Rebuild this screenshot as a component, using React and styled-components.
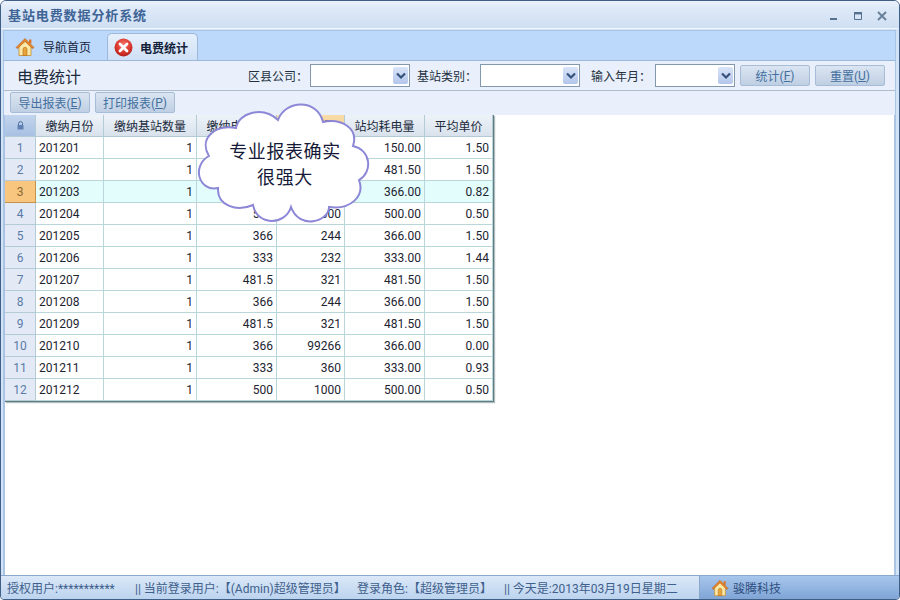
import React from 'react';
import styled, { createGlobalStyle } from 'styled-components';

const rows = [
  ['201201', 1, '150', '100', '150.00', '1.50'],
  ['201202', 1, '481.5', '321', '481.50', '1.50'],
  ['201203', 1, '366', '446', '366.00', '0.82'],
  ['201204', 1, '500', '1000', '500.00', '0.50'],
  ['201205', 1, '366', '244', '366.00', '1.50'],
  ['201206', 1, '333', '232', '333.00', '1.44'],
  ['201207', 1, '481.5', '321', '481.50', '1.50'],
  ['201208', 1, '366', '244', '366.00', '1.50'],
  ['201209', 1, '481.5', '321', '481.50', '1.50'],
  ['201210', 1, '366', '99266', '366.00', '0.00'],
  ['201211', 1, '333', '360', '333.00', '0.93'],
  ['201212', 1, '500', '1000', '500.00', '0.50'],
];

const colWidths = [31, 68, 93, 80, 68, 80, 68];

function HomeIcon({ size }) {
  return (
    <svg width={size} height={size} viewBox="0 0 20 20">
      <path d="M4 9v9.5h12V9L10 3.5z" fill="#fbe9a8" stroke="#c98a2a" strokeWidth="0.8" />
      <path d="M8 18.5v-6.2a2 2 0 0 1 4 0v6.2z" fill="#e8a33a" stroke="#b06f18" strokeWidth="0.6" />
      <path d="M1 10.5 10 1.5l9 9-1.6 1L10 4.4 2.6 11.5z" fill="#e8862a" stroke="#b4601a" strokeWidth="0.6" strokeLinejoin="round" />
      <rect x="14" y="2.5" width="2.4" height="4" fill="#d9762a" />
    </svg>
  );
}

function CloseIcon() {
  return (
    <svg width="19" height="19" viewBox="0 0 19 19">
      <defs>
        <radialGradient id="redball" cx="50%" cy="35%" r="70%">
          <stop offset="0%" stopColor="#f47a6c" />
          <stop offset="60%" stopColor="#d9352b" />
          <stop offset="100%" stopColor="#a81d18" />
        </radialGradient>
      </defs>
      <circle cx="9.5" cy="9.5" r="9" fill="url(#redball)" />
      <path d="M6 6l7 7M13 6l-7 7" stroke="#fff" strokeWidth="2.8" strokeLinecap="round" />
    </svg>
  );
}

function Combo({ width }) {
  return (
    <ComboBox $width={width}>
      <ComboArrow>
        <svg width="10" height="8" viewBox="0 0 10 8">
          <path d="M1 1.5 5 5.5 9 1.5" fill="none" stroke="#35527d" strokeWidth="2.2" />
        </svg>
      </ComboArrow>
    </ComboBox>
  );
}

function Cloud() {
  return (
    <CloudWrap>
      <svg width="178" height="126" viewBox="195 100 178 126">
        <path
          d="M235 128 C238 112 262 106 277 120 C284 100 316 98 322 122 C340 118 358 128 352 146 C370 150 372 172 358 180 C364 196 350 210 328 207 C328 222 298 230 290 207 C284 226 256 226 252 205 C236 212 216 206 217 188 C198 192 190 166 208 156 C198 140 212 124 235 128 Z"
          fill="#fff"
          stroke="#8c87d6"
          strokeWidth="2"
        />
      </svg>
      <CloudText>专业报表确实<br />很强大</CloudText>
    </CloudWrap>
  );
}

export default function App() {
  return (
    <>
      <Global />
      <Win>
        <TitleBar>
          <AppTitle>基站电费数据分析系统</AppTitle>
          <WinControls>
            <svg width="10" height="10" viewBox="0 0 10 10"><rect x="1" y="7" width="7" height="2" fill="#56708f" /></svg>
            <svg width="10" height="10" viewBox="0 0 10 10"><path d="M1.5 1.5h7v7h-7z" fill="none" stroke="#56708f" /><rect x="1" y="1" width="8" height="2.4" fill="#56708f" /></svg>
            <svg width="10" height="10" viewBox="0 0 10 10"><path d="M1 1l8 8M9 1l-8 8" stroke="#6b8099" strokeWidth="2" /></svg>
          </WinControls>
        </TitleBar>
        <Body>
          <TabStrip>
            <Tab>
              <HomeIcon size={20} />
              <span>导航首页</span>
            </Tab>
            <Tab $active>
              <CloseIcon />
              <span>电费统计</span>
            </Tab>
          </TabStrip>
          <Panel>
            <FilterBar>
              <PageTitle>电费统计</PageTitle>
              <FilterLabel $width={62}>区县公司：</FilterLabel>
              <Combo width={100} />
              <FilterLabel $width={63} $gap={7}>基站类别：</FilterLabel>
              <Combo width={100} />
              <FilterLabel $width={64} $gap={11}>输入年月：</FilterLabel>
              <Combo width={80} />
              <ActionButton $gap={5}>统计(<u>F</u>)</ActionButton>
              <ActionButton $gap={5}>重置(<u>U</u>)</ActionButton>
            </FilterBar>
            <ReportBar>
              <ReportButton>导出报表(<u>E</u>)</ReportButton>
              <ReportButton>打印报表(<u>P</u>)</ReportButton>
            </ReportBar>
            <GridArea>
              <DataGrid>
                <colgroup>
                  {colWidths.map((w, i) => <col key={i} style={{ width: w }} />)}
                </colgroup>
                <thead>
                  <tr>
                    <Corner>
                      <svg width="7" height="9" viewBox="0 0 7 9">
                        <path d="M1.5 4V2.6a2 2 0 0 1 4 0V4" fill="none" stroke="#4d6f9e" />
                        <rect x="0.5" y="4" width="6" height="4.5" fill="#5f82b3" />
                      </svg>
                    </Corner>
                    <HeadCell>缴纳月份</HeadCell>
                    <HeadCell>缴纳基站数量</HeadCell>
                    <HeadCell>缴纳电费额</HeadCell>
                    <HeadCell $hot>缴纳电量</HeadCell>
                    <HeadCell>站均耗电量</HeadCell>
                    <HeadCell>平均单价</HeadCell>
                  </tr>
                </thead>
                <tbody>
                  {rows.map((r, i) => (
                    <tr key={r[0]}>
                      <RowHead $current={i === 2}>{i + 1}</RowHead>
                      <Cell $current={i === 2} $left>{r[0]}</Cell>
                      {r.slice(1).map((v, j) => (
                        <Cell key={j} $current={i === 2}>{v}</Cell>
                      ))}
                    </tr>
                  ))}
                </tbody>
              </DataGrid>
              <Cloud />
            </GridArea>
          </Panel>
        </Body>
        <StatusBar>
          <StatusInfo>
            <StatusItem $width={128}>授权用户:***********</StatusItem>
            <StatusItem $width={222}>|| 当前登录用户:【(Admin)超级管理员】</StatusItem>
            <StatusItem $width={147}>登录角色:【超级管理员】</StatusItem>
            <StatusItem>|| 今天是:2013年03月19日星期二</StatusItem>
          </StatusInfo>
          <Brand>
            <HomeIcon size={18} />
            <span>骏腾科技</span>
          </Brand>
        </StatusBar>
      </Win>
    </>
  );
}

const Global = createGlobalStyle`
  html, body {
    margin: 0;
    padding: 0;
    background: #fff;
  }
  body {
    font-family: "Roboto", "Noto Sans CJK SC", sans-serif;
    font-size: 12px;
  }
`;

const Win = styled.div`
  width: 900px;
  height: 600px;
  box-sizing: border-box;
  display: flex;
  flex-direction: column;
  border: 1px solid #3f5f86;
  border-radius: 6px 6px 4px 4px;
  overflow: hidden;
  background: #d3e3f7;
`;

const TitleBar = styled.div`
  height: 28px;
  flex-shrink: 0;
  display: flex;
  align-items: center;
  justify-content: space-between;
  padding: 0 7px;
  box-sizing: border-box;
  background: linear-gradient(#eaf1fb, #dce8f7 35%, #cfdff3);
  border-bottom: 1px solid #f2f7fd;
`;

const AppTitle = styled.div`
  font-size: 13px;
  font-weight: bold;
  letter-spacing: 0.9px;
  color: #3f6496;
`;

const WinControls = styled.div`
  display: flex;
  gap: 14px;
  padding-right: 5px;
  padding-top: 3px;
`;

const Body = styled.div`
  flex: 1;
  min-height: 0;
  display: flex;
  flex-direction: column;
  margin: 1px 3px 0 2px;
  border: 1px solid #a9c4e4;
  border-bottom: none;
  background: #bcd8fb;
`;

const TabStrip = styled.div`
  height: 29px;
  flex-shrink: 0;
  display: flex;
  align-items: flex-end;
  padding-left: 1px;
  gap: 7px;
`;

const Tab = styled.div`
  height: 27px;
  box-sizing: border-box;
  display: flex;
  align-items: center;
  gap: ${(p) => (p.$active ? '7px' : '8px')};
  width: ${(p) => (p.$active ? '91px' : '95px')};
  padding-left: ${(p) => (p.$active ? '6px' : '10px')};
  color: #15233a;
  font-weight: ${(p) => (p.$active ? 'bold' : 'normal')};
  ${(p) =>
    p.$active &&
    `
    background: linear-gradient(#e6f0fc, #cfe0f6);
    border: 1px solid #9db8d8;
    border-bottom: none;
    border-radius: 5px 5px 0 0;
  `}
`;

const Panel = styled.div`
  flex: 1;
  min-height: 0;
  display: flex;
  flex-direction: column;
  border-top: 1px solid #9db8d8;
  background: #e9f0fb;
`;

const FilterBar = styled.div`
  height: 30px;
  flex-shrink: 0;
  box-sizing: border-box;
  display: flex;
  align-items: center;
  padding-left: 13px;
  border-bottom: 1px solid #aebccb;
`;

const PageTitle = styled.div`
  width: 231px;
  font-size: 16px;
  color: #1c2a3c;
`;

const FilterLabel = styled.div`
  width: ${(p) => p.$width}px;
  margin-left: ${(p) => p.$gap || 0}px;
  color: #24303f;
  white-space: nowrap;
`;

const ComboBox = styled.div`
  width: ${(p) => p.$width}px;
  height: 23px;
  box-sizing: border-box;
  display: flex;
  justify-content: flex-end;
  align-items: center;
  padding-right: 1px;
  background: #fff;
  border: 1px solid #8298ad;
`;

const ComboArrow = styled.div`
  width: 15px;
  height: 17px;
  display: flex;
  align-items: center;
  justify-content: center;
  background: linear-gradient(#d9e4f8, #b3c6ea);
  border-radius: 2px;
`;

const ActionButton = styled.div`
  width: 70px;
  height: 21px;
  box-sizing: border-box;
  margin-left: ${(p) => p.$gap}px;
  display: flex;
  align-items: center;
  justify-content: center;
  white-space: pre;
  color: #44709f;
  background: linear-gradient(#dbe5f2, #bfcfe3);
  border: 1px solid #a7bcd6;
  border-radius: 2px;
`;

const ReportBar = styled.div`
  height: 24px;
  flex-shrink: 0;
  box-sizing: border-box;
  display: flex;
  gap: 5px;
  padding: 1px 0 0 6px;
`;

const ReportButton = styled(ActionButton)`
  width: 80px;
  margin-left: 0;
`;

const GridArea = styled.div`
  flex: 1;
  min-height: 0;
  position: relative;
  background: #fff;
  border: solid #a9c4e4;
  border-width: 0 1px;
`;

const DataGrid = styled.table`
  width: 488px;
  table-layout: fixed;
  border-collapse: separate;
  border-spacing: 0;
  border-right: 1px solid #5f7c80;
  border-bottom: 1px solid #5f7c80;
  box-shadow: 1px 1px 1px rgba(95, 124, 128, 0.5);
  color: #1c2430;
`;

const HeadCell = styled.th`
  height: 21px;
  padding: 0;
  box-sizing: border-box;
  font-weight: normal;
  text-align: center;
  white-space: nowrap;
  overflow: hidden;
  color: #1c2a3c;
  border-right: 1px solid #b3cbd4;
  border-bottom: 1px solid #b3cbd4;
  background: ${(p) =>
    p.$hot
      ? 'linear-gradient(#f9dca8, #f5c98a)'
      : 'linear-gradient(#eef3f9, #d9e2ec)'};
`;

const Corner = styled.th`
  height: 21px;
  padding: 0;
  background: linear-gradient(#c3d5ee, #a8c0e2);
  border-right: 1px solid #b3cbd4;
  border-bottom: 1px solid #b3cbd4;
`;

const RowHead = styled.td`
  height: 22px;
  padding: 0;
  box-sizing: border-box;
  text-align: center;
  color: ${(p) => (p.$current ? '#8a6a38' : '#5a7ba6')};
  background: ${(p) => (p.$current ? '#f8c67e' : '#e3eaf6')};
  border-right: 1px solid ${(p) => (p.$current ? '#c4924a' : '#b3cbd4')};
  border-bottom: 1px solid ${(p) => (p.$current ? '#c4924a' : '#b3cbd4')};
`;

const Cell = styled.td`
  height: 22px;
  padding: 0 3px;
  box-sizing: border-box;
  text-align: ${(p) => (p.$left ? 'left' : 'right')};
  background: ${(p) => (p.$current ? '#e3fdfd' : '#fff')};
  border-right: 1px solid #b9d6da;
  border-bottom: 1px solid #b9d6da;
`;

const CloudWrap = styled.div`
  position: absolute;
  left: 191px;
  top: -15px;
  width: 178px;
  height: 126px;
`;

const CloudText = styled.div`
  position: absolute;
  inset: 0;
  display: flex;
  align-items: center;
  justify-content: center;
  text-align: center;
  padding-top: 4px;
  font-size: 18px;
  letter-spacing: 0.6px;
  line-height: 26px;
  color: #151a38;
`;

const StatusBar = styled.div`
  height: 24px;
  flex-shrink: 0;
  display: flex;
  border-top: 1px solid #8aa8cc;
  box-sizing: border-box;
`;

const StatusInfo = styled.div`
  width: 698px;
  display: flex;
  align-items: center;
  padding-left: 6px;
  box-sizing: border-box;
  color: #3f5f8c;
  background: linear-gradient(#dbe8f8, #bcd3ee);
`;

const StatusItem = styled.div`
  white-space: nowrap;
  ${(p) => p.$width && `width: ${p.$width}px;`}
`;

const Brand = styled.div`
  flex: 1;
  display: flex;
  align-items: center;
  gap: 4px;
  padding-left: 11px;
  color: #2f4f7f;
  border-left: 1px solid #8aa8cc;
  background: linear-gradient(#a8c6ec, #7fa5d6);
`;
